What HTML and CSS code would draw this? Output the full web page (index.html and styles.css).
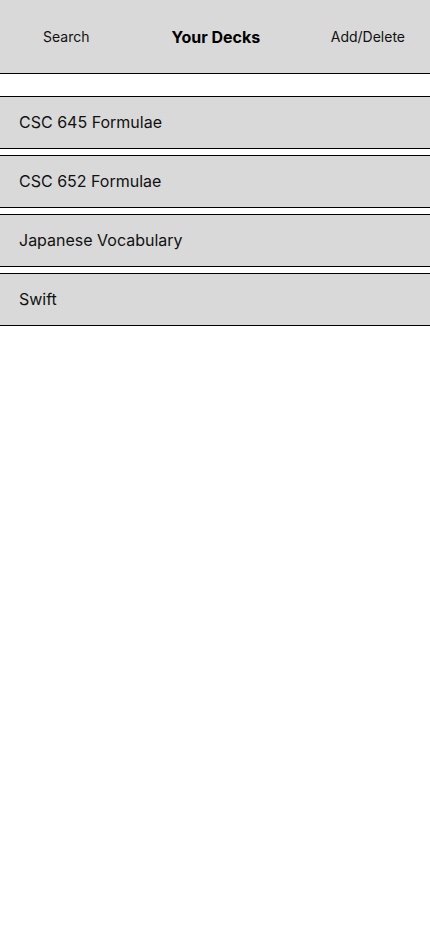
FILE: index.html
```html
<!DOCTYPE html>
<html lang="en">
<head>
<meta charset="utf-8">
<title>Your Decks</title>
<link rel="stylesheet" href="styles.css">
</head>
<body>
<header class="topbar">
  <span class="nav-btn nav-left">Search</span>
  <span class="title">Your Decks</span>
  <span class="nav-btn nav-right">Add/Delete</span>
</header>
<main class="deck-list">
  <div class="deck">CSC 645 Formulae</div>
  <div class="deck">CSC 652 Formulae</div>
  <div class="deck">Japanese Vocabulary</div>
  <div class="deck">Swift</div>
</main>
</body>
</html>
```
FILE: styles.css
```css
html, body {
  margin: 0;
  padding: 0;
  background: #ffffff;
}
body {
  font-family: Inter, "Noto Sans", sans-serif;
  color: #000;
  width: 430px;
  min-height: 932px;
}
.topbar {
  box-sizing: border-box;
  height: 74px;
  background: #d9d9d9;
  border-bottom: 1px solid #000;
  display: flex;
  align-items: center;
  padding: 0 25px 0 43px;
}
.nav-btn {
  font-size: 14px;
  line-height: 17px;
  color: #111;
}
.title {
  font-size: 16px;
  font-weight: 700;
  line-height: 19px;
  margin-left: 82px;
  padding-top: 2px;
}
.nav-right {
  margin-left: auto;
}
.deck-list {
  display: flex;
  flex-direction: column;
  gap: 6px;
  padding-top: 22px;
}
.deck {
  box-sizing: border-box;
  height: 53px;
  background: #d9d9d9;
  border-top: 1px solid #000;
  border-bottom: 1px solid #000;
  display: flex;
  align-items: center;
  padding-left: 19px;
  padding-bottom: 1px;
  font-size: 16px;
  color: #111;
}
```
